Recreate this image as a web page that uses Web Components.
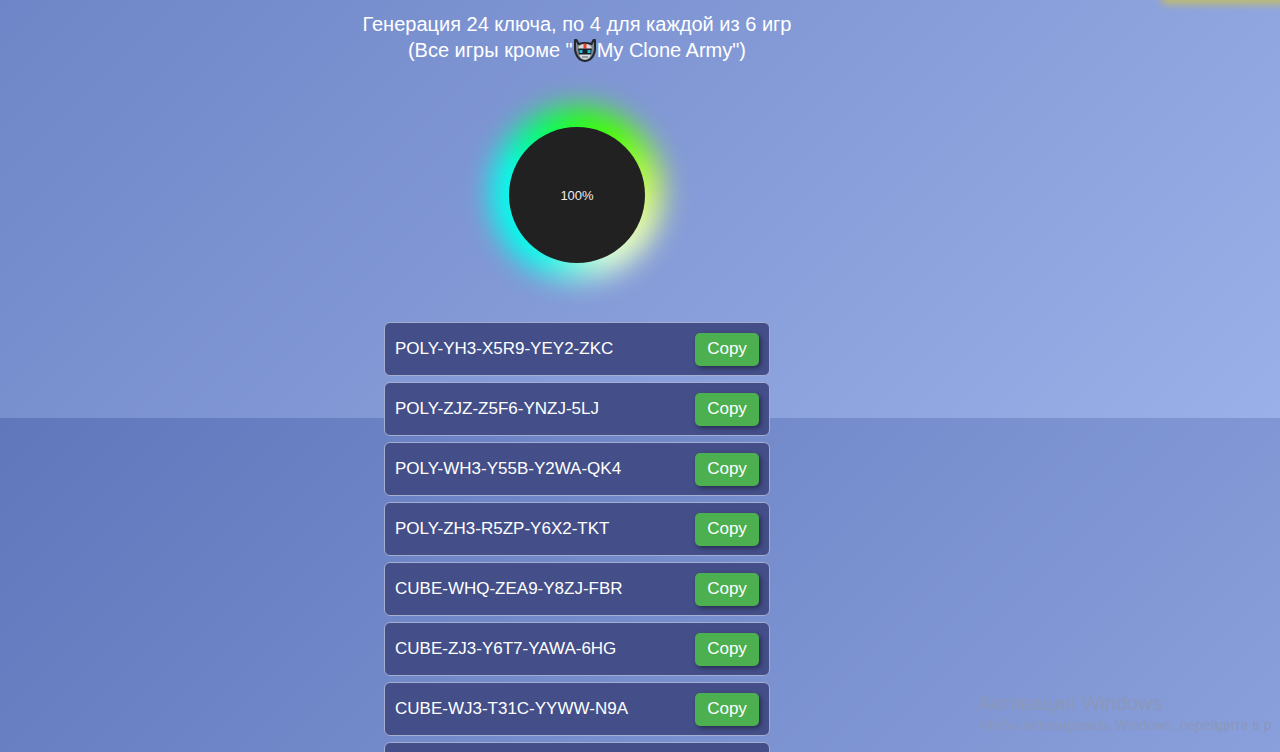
<!DOCTYPE html>
<html lang="ru">
<head>
<meta charset="utf-8">
<meta name="viewport" content="width=device-width, initial-scale=1">
<title>Key generator</title>
<style>
  body {
    margin: 0;
    height: 100vh;
    overflow: hidden;
    color: #fff;
    font-family: "Liberation Sans", Arial, sans-serif;
    background: linear-gradient(135deg, #6077bc, #9ab0e8) 0 418px / 100% 980px repeat-y;
  }
</style>
</head>
<body>
<key-page></key-page>

<script>
class RobotIcon extends HTMLElement {
  constructor () {
    super()
    this.shadow = this.attachShadow({ mode: 'open' })
  }

  connectedCallback () {
    this.shadow.innerHTML =
    /* html */`
    <style>
      :host{
        display: inline-block;
        height: 24px;
        vertical-align: -6px;
        width: 24px;
      }

      svg{
        display: block;
      }
    </style>
    <svg xmlns="http://www.w3.org/2000/svg" width="24" height="24" viewBox="0 0 24 24" aria-hidden="true">
      <path d="M2 1 3.500 1 5.500 5Q12 3 18.500 5L20.500 1 22 1 22 11Q21 17 17 20.500 12 23.500 7 20.500 3 17 2 11Z" fill="#7d868e" stroke="#22272d" stroke-width="2" stroke-linejoin="round"/>
      <path d="M5 10Q6 5 12 5T19 10L17.500 17Q15 20.500 12 20.500T6.500 17Z" fill="#d8dbde"/>
      <path d="M10.500 4.500h3v5h-3z" fill="#e8422f"/>
      <path d="M5 9.500h14l-1 6h-12z" fill="#182127"/>
      <path d="M6.500 11h3v3h-3zM14.500 11h3v3h-3z" fill="#22bcd8"/>
      <path d="M9 18h6" stroke="#515961"/>
    </svg>
    `
  }
}
customElements.define('robot-icon', RobotIcon)

class ProgressRing extends HTMLElement {
  constructor () {
    super()
    this.shadow = this.attachShadow({ mode: 'open' })
  }

  connectedCallback () {
    this.shadow.innerHTML =
    /* html */`
    <style>
      :host{
        display: grid;
        height: 136px;
        isolation: isolate;
        place-items: center;
        position: relative;
        width: 136px;
      }

      :host::before,
      :host::after{
        border-radius: 50%;
        content: "";
        position: absolute;
        z-index: -1;
      }

      :host::before{
        background: conic-gradient(#24ff18, #4cff00 35deg, #c5fa4c 80deg, #ecffb0 120deg, #dcffda 155deg, #80fbe0 180deg, #00ffec 215deg, #00ffec 290deg, #00ff70 325deg, #24ff18);
        filter: blur(14px);
        inset: -21px -18px -17px;
      }

      :host::after{
        background-color: #212121;
        inset: 0;
      }

      .progress-text{
        color: #eee;
        font-size: 13px;
      }
    </style>
    <span class="progress-text"><slot></slot></span>
    `
  }
}
customElements.define('progress-ring', ProgressRing)

class KeyItem extends HTMLElement {
  constructor () {
    super()
    this.shadow = this.attachShadow({ mode: 'open' })
  }

  connectedCallback () {
    this.shadow.innerHTML =
    /* html */`
    <style>
      :host{
        align-items: center;
        background-color: #444f8a;
        border: 1px solid #a5add0;
        border-radius: 6px;
        box-sizing: border-box;
        display: flex;
        font-size: 17px;
        justify-content: space-between;
        min-height: 54px;
        padding: 0 10px;
      }

      :host(:empty) button{
        display: none;
      }

      button{
        background-color: #4caf50;
        border: none;
        border-radius: 5px;
        box-shadow: 2px 2px 5px rgba(0, 0, 0, 0.45);
        color: #fff;
        cursor: pointer;
        font-family: inherit;
        font-size: 17px;
        height: 33px;
        padding: 0;
        width: 64px;
      }
    </style>
    <span><slot></slot></span>
    <button type="button">Copy</button>
    `
    this.shadow.querySelector('button').addEventListener('click', () => {
      navigator.clipboard?.writeText(this.textContent)
    })
  }
}
customElements.define('key-item', KeyItem)

class ActivationNotice extends HTMLElement {
  constructor () {
    super()
    this.shadow = this.attachShadow({ mode: 'open' })
  }

  connectedCallback () {
    this.shadow.innerHTML =
    /* html */`
    <style>
      :host{
        bottom: 17px;
        color: #8b97b9;
        display: block;
        left: calc(100% - 302px);
        overflow: hidden;
        pointer-events: none;
        position: fixed;
        right: 0;
        white-space: nowrap;
      }

      p{
        margin: 0;
      }

      .title{
        font-size: 20px;
        line-height: 24px;
      }

      .text{
        font-size: 14px;
        line-height: 20px;
      }
    </style>
    <p class="title">Активация Windows</p>
    <p class="text">Чтобы активировать Windows, перейдите в р</p>
    `
  }
}
customElements.define('activation-notice', ActivationNotice)

class KeyPage extends HTMLElement {
  constructor () {
    super()
    this.shadow = this.attachShadow({ mode: 'open' })
    this.keys = [
      'POLY-YH3-X5R9-YEY2-ZKC',
      'POLY-ZJZ-Z5F6-YNZJ-5LJ',
      'POLY-WH3-Y55B-Y2WA-QK4',
      'POLY-ZH3-R5ZP-Y6X2-TKT',
      'CUBE-WHQ-ZEA9-Y8ZJ-FBR',
      'CUBE-ZJ3-Y6T7-YAWA-6HG',
      'CUBE-WJ3-T31C-YYWW-N9A',
      ''
    ]
  }

  connectedCallback () {
    this.shadow.innerHTML =
    /* html */`
    <style>
      :host{
        display: block;
      }

      main{
        align-items: center;
        display: flex;
        flex-direction: column;
        padding: 11px 126px 0 0;
      }

      .description{
        font-size: 20px;
        line-height: 26px;
        margin: 0;
        text-align: center;
      }

      progress-ring{
        margin: 64px 0 59px;
      }

      .keys{
        display: flex;
        flex-direction: column;
        gap: 6px;
        max-width: 386px;
        width: 100%;
      }

      .glow{
        background-color: #c3bd66;
        filter: blur(4px);
        height: 16px;
        position: fixed;
        right: -16px;
        top: -12px;
        width: 134px;
      }
    </style>
    <main>
      <p class="description">Генерация 24 ключа, по 4 для каждой из 6 игр<br>(Все игры кроме "<robot-icon></robot-icon>My Clone Army")</p>
      <progress-ring>100%</progress-ring>
      <section class="keys">
        ${this.keys.map(key => `<key-item>${key}</key-item>`).join('')}
      </section>
    </main>
    <div class="glow"></div>
    <activation-notice></activation-notice>
    `
  }
}
customElements.define('key-page', KeyPage)
</script>
</body>
</html>
